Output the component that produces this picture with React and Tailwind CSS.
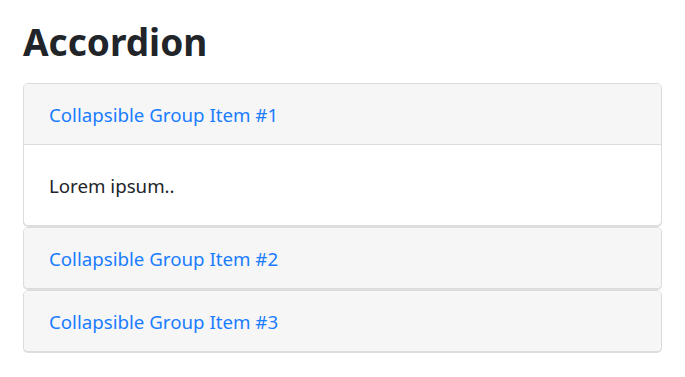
export default function App() {
  const items = [
    { title: "Collapsible Group Item #1", open: true },
    { title: "Collapsible Group Item #2", open: false },
    { title: "Collapsible Group Item #3", open: false },
  ];

  return (
    <div className="min-h-screen bg-white px-[23px] pt-[18px] font-['Noto_Sans',sans-serif] text-[#212529]">
      <h1 className="text-[37px] font-bold leading-[48px] mb-[17px]">Accordion</h1>

      <div className="flex flex-col gap-[1px]">
        {items.map((item) => (
          <div
            key={item.title}
            className="rounded-[5px] border border-[#dcdcdc] bg-white shadow-[0_1px_0_#dedede] overflow-hidden"
          >
            <div
              className={`flex items-center px-[25px] pt-[2px] bg-[#f6f6f6] ${
                item.open ? "h-[61px] border-b border-[#dcdcdc]" : "h-[60px]"
              }`}
            >
              <a href="#" className="text-[18.7px] text-[#1a7cff]">
                {item.title}
              </a>
            </div>
            {item.open && (
              <div className="h-[80px] flex items-center px-[25px] pt-[2px] text-[18.7px]">
                Lorem ipsum..
              </div>
            )}
          </div>
        ))}
      </div>
    </div>
  );
}
